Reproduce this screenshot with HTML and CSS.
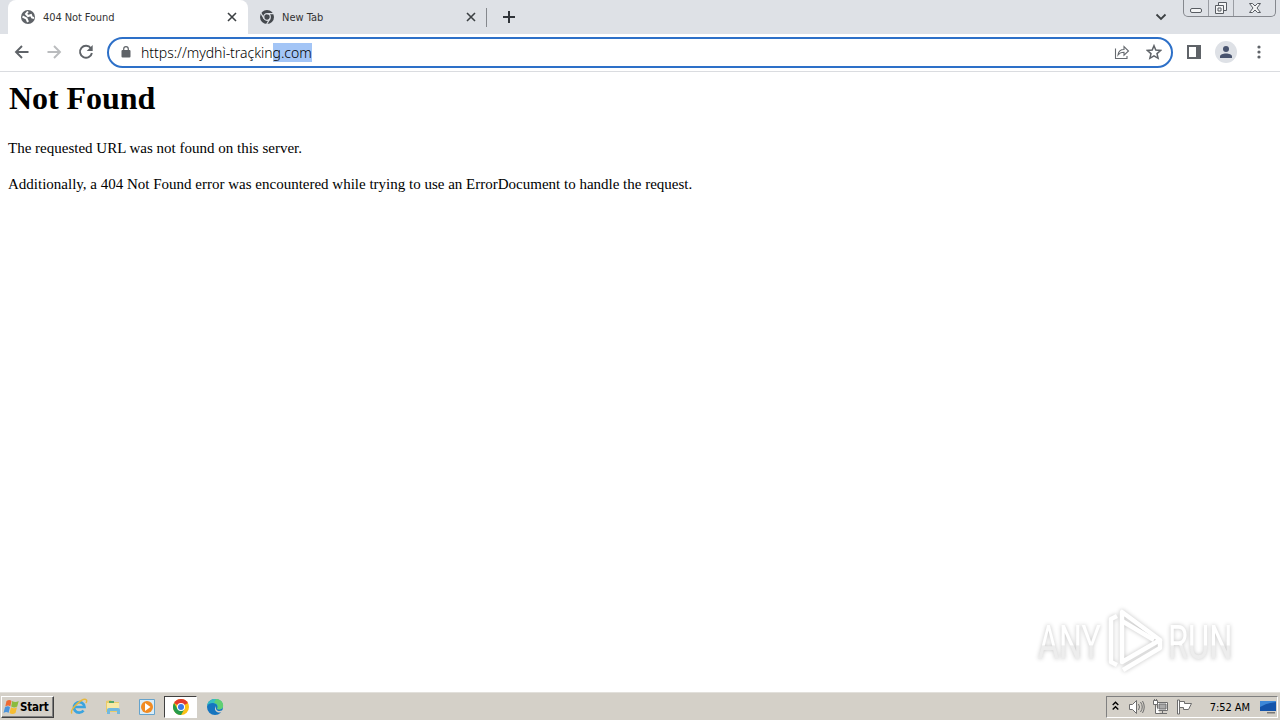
FILE: index.html
```html
<!DOCTYPE html>
<html lang="en">
<head>
    <meta charset="UTF-8">
    <title>404 Not Found</title>
    <link rel="stylesheet" href="styles.css">
</head>
<body>
    <!-- Tab strip -->
    <header class="tabs">
        <div class="tab active">
            <svg class="favicon" viewBox="0 0 16 16"><circle cx="8" cy="8" r="7" fill="#5f6368"/><path d="M2.500 7.500l4 2 1.500 3.500M8 2.500L6 5l2 2 3-1 1 2.500 2 .5" fill="none" stroke="#fff" stroke-width="2"/></svg>
            <span class="tab-title title-404">404 Not Found</span>
            <svg class="close" viewBox="0 0 10 10"><path d="M1 1l8 8M9 1L1 9"/></svg>
        </div>
        <div class="tab">
            <svg class="favicon" viewBox="0 0 16 16"><circle cx="8" cy="8" r="7" fill="#45494e"/><g fill="none" stroke="#dee1e6" stroke-width="1.2"><circle cx="8" cy="8" r="3.3"/><path d="M8 4.7h7M5.1 9.6L1.7 3.7M10.9 9.6l-3.4 5.9"/></g></svg>
            <span class="tab-title title-new">New Tab</span>
            <svg class="close" viewBox="0 0 10 10"><path d="M1 1l8 8M9 1L1 9"/></svg>
        </div>
        <span class="divider"></span>
        <svg class="plus" viewBox="0 0 12 12"><path d="M6 0v12M0 6h12"/></svg>
        <svg class="chevron" viewBox="0 0 12 8"><path d="M1.500 1.500L6 6l4.500-4.500"/></svg>
        <div class="window-buttons">
            <span><svg width="14" height="14" viewBox="0 0 14 14"><rect x="1.500" y="7.500" width="11" height="4" rx="1.500"/></svg></span>
            <span><svg width="14" height="14" viewBox="0 0 14 14"><path d="M4.500 4V1.500h8v8H10M1.500 4.500h8v8h-8zM4 7h3v3H4z"/></svg></span>
            <span><svg width="14" height="14" viewBox="0 0 14 14"><path d="M1.500 2.500h3L7 5l2.500-2.500h3L9 7l3.500 4.500h-3L7 9l-2.500 2.500h-3L5 7z"/></svg></span>
        </div>
    </header>

    <!-- Toolbar -->
    <nav class="toolbar">
        <svg class="nav-icon" viewBox="0 0 16 16"><path d="M14.500 8H2M8 2L2 8l6 6"/></svg>
        <svg class="nav-icon disabled" viewBox="0 0 16 16"><path d="M1.500 8H14M8 2l6 6-6 6"/></svg>
        <svg class="nav-icon" viewBox="0 0 16 16"><path d="M12.900 4.300A6 6 0 1 0 13.900 9"/><path d="M14.700 1v6h-6z" class="solid"/></svg>
        <div class="omnibox">
            <svg class="lock" viewBox="0 0 10 12"><rect x=".5" y="4" width="9" height="7.500" rx="1" fill="#5f6368"/><path d="M2.700 5V3a2.300 2.300 0 0 1 4.600 0v2" fill="none" stroke="#5f6368" stroke-width="1.200"/></svg>
            <span class="url">https://mydhì-traçkin<mark>g.com</mark></span>
            <svg class="share" viewBox="0 0 16 16"><path d="M1.500 4.500v10h11.500v-2.500M4 11c.5-4 3-5.500 6-5.500V2.500L14.500 7 10 11.200V8.300C7.500 8.300 5.500 9 4 11z"/></svg>
            <svg class="star" viewBox="0 0 16 16"><path d="M8 1.700l1.800 4.400 4.800.4-3.600 3.100 1.100 4.700L8 11.800l-4.100 2.500L5 9.600 1.400 6.500l4.800-.4z"/></svg>
        </div>
        <svg class="panel" viewBox="0 0 14 14"><path d="M0 0h14v14H0z M2 2v10h7V2z" fill="#5f6368" fill-rule="evenodd"/></svg>
        <span class="avatar"><svg width="12" height="12" viewBox="0 0 12 12"><circle cx="6" cy="3" r="3" fill="#48536e"/><path d="M0 12v-1.500C0 8.500 3 7.500 6 7.500s6 1 6 3V12z" fill="#48536e"/></svg></span>
        <svg class="dots" viewBox="0 0 4 14"><circle cx="2" cy="2" r="1.600"/><circle cx="2" cy="7" r="1.600"/><circle cx="2" cy="12" r="1.600"/></svg>
    </nav>

    <!-- Page -->
    <main class="page">
        <h1>Not Found</h1>
        <p>The requested URL was not found on this server.</p>
        <p>Additionally, a 404 Not Found error was encountered while trying to use an ErrorDocument to handle the request.</p>
        <svg class="watermark" viewBox="0 0 210 72">
            <defs>
                <linearGradient id="fade" x1="0" y1="0" x2="0" y2="1">
                    <stop offset="54%" stop-color="#fff"/>
                    <stop offset="56%" stop-color="#ededed"/>
                </linearGradient>
            </defs>
            <g fill="url(#fade)">
                <text transform="translate(8 54) scale(.67 1)">ANY</text>
                <text transform="translate(138 54) scale(.68 1)">RUN</text>
            </g>
            <g class="mark">
                <path d="M87 11l-6 3v43l6 3"/>
                <path d="M92 7v50l38-22z"/>
                <path d="M92 16l32 19M93 65l37-22v-8"/>
            </g>
        </svg>
    </main>

    <!-- Taskbar -->
    <footer class="taskbar">
        <div class="start">
            <svg width="17" height="16" viewBox="0 0 17 16"><path d="M3.500 2q3-2 5 0L7.300 7.500q-2-2-5 0z" fill="#ef6a32"/><path d="M9.200 2q3 2 6.500 0l-1.500 5.500q-3 2-6 0z" fill="#8bbb3d"/><path d="M2 8.300q3-2 5 0L5.500 14q-2-2-5 0z" fill="#4b94dc"/><path d="M8 8.300q3 2 6 0L12.500 14q-3 2-6 0z" fill="#f6bd32"/></svg>
            <span>Start</span>
        </div>
        <div class="apps">
            <span class="app"><svg width="18" height="18" viewBox="0 0 18 18"><path d="M13.500 12.500A5.300 5.300 0 1 1 14.500 9H4.500" fill="none" stroke="#3ba4df" stroke-width="2.700"/><path d="M2 15.500C-1 12 13-1.500 16.500 2c.5.500 0 2-.5 3" fill="none" stroke="#e7b83d" stroke-width="1.400"/></svg></span>
            <span class="app"><svg width="18" height="18" viewBox="0 0 18 18"><path d="M2 3l5-1 1 2h7v10H2z" fill="#e9cb6a"/><path d="M3 5h12v6H3z" fill="#f8e9a5"/><path d="M5 3h5v2H5z" fill="#54a66a"/><path d="M3 16v-4q0-2 2-2h9q2 0 2 2v4h-3v-3H6v3z" fill="#72b9df"/></svg></span>
            <span class="app"><svg width="18" height="18" viewBox="0 0 18 18"><path d="M1.500 1.500h15v15h-15z" fill="#d9edf9" stroke="#65a3cc"/><circle cx="9" cy="9" r="6" fill="#f18b22"/><path d="M7 5v8l5.500-4z" fill="#fff"/></svg></span>
            <span class="app pressed"><svg width="16" height="16" viewBox="0 0 16 16"><circle cx="8" cy="8" r="8" fill="#fbc116"/><path d="M8 8L1.070 4A8 8 0 0 1 14.930 4z" fill="#e33b2e"/><path d="M1.070 4A8 8 0 0 0 8 16l3.500-6H4.500z" fill="#269b4b"/><circle cx="8" cy="8" r="4" fill="#fff"/><circle cx="8" cy="8" r="3" fill="#3979e8"/></svg></span>
            <span class="app"><svg width="18" height="18" viewBox="0 0 18 18"><circle cx="9" cy="9" r="8" fill="#1675bf"/><path d="M1 8C2 3 5 1 9 1c5 0 8 3 8 7 0 3-3 4-6 3 2-3-1-6-4-6-3 0-5 1-6 3z" fill="#37bfc0"/><path d="M10 1c5 0 8 4 7 8-1 2-3 3-6 2 2-3 0-6-3-6z" fill="#60cf73"/><path d="M10 8c-1 4 2 6 6 4.500L18 12v6h-3l1-4c-5 2-9-2-6-6z" fill="#d4d0c8"/></svg></span>
        </div>
        <div class="tray">
            <svg class="expand" width="7" height="10" viewBox="0 0 7 10"><path d="M.7 4L3.500 1.200 6.300 4M.7 8.500l2.800-2.800 2.800 2.800" fill="none" stroke="#000" stroke-width="1.400"/></svg>
            <svg class="sound" width="17" height="16" viewBox="0 0 17 16"><path d="M1.500 5.500h3l4-4v13l-4-4h-3z" fill="#fff"/><path d="M10.500 5q2 3 0 6M12.500 3q3.500 5 0 10M14.500 2q3.500 6 0 12"/></svg>
            <svg class="network" width="17" height="16" viewBox="0 0 17 16"><path d="M5.500 3.500h10v8h-10zM8 14.500h7M10.500 12v2" fill="#fff"/><path d="M7 5h7v5H7z" fill="#aaa"/><path d="M1.500 1.500v4h4v-4zM2.500 0v2M4.500 0v2M3.500 6v8.500H8" fill="#fff"/></svg>
            <svg class="flag" width="17" height="16" viewBox="0 0 17 16"><path d="M3.500 2.500h5v2h7l-3 6h-5v-2h-4z" fill="#fff"/><path d="M1.500 1v14h2V1z" fill="#fff"/></svg>
            <span class="clock">7:52 AM</span>
            <svg class="desktop" width="16" height="14" viewBox="0 0 16 14"><path d="M0 1h16v10H0z" fill="#1454aa"/><path d="M0 7Q7 3 16 2V1H0z" fill="#3d88d8"/><path d="M7 12h8v1.500H7z" fill="#777"/></svg>
        </div>
    </footer>
</body>
</html>
```
FILE: styles.css
```css
* {
    box-sizing: border-box;
}

body {
    margin: 0;
    height: 720px;
    display: flex;
    flex-direction: column;
    overflow: hidden;
    background: #fff;
    font-family: "DejaVu Sans Condensed", "DejaVu Sans", sans-serif;
}

svg {
    display: block;
    flex: none;
}

.tabs {
    display: flex;
    height: 34px;
    padding-left: 8px;
    background: #dee1e6;
}

.tab {
    display: flex;
    align-items: center;
    width: 238px;
    padding: 0 10px 0 11px;
}

.tab.active {
    width: 240px;
    padding: 0 11px 0 12px;
    background: #fff;
    border-radius: 8px 8px 0 0;
}

.favicon {
    width: 16px;
    height: 16px;
}

.tab-title {
    flex: 1;
    margin-left: 7px;
    font-family: "DejaVu Sans", sans-serif;
    font-stretch: condensed;
    font-size: 11px;
    white-space: nowrap;
    color: #333;
}

.title-404 {
    letter-spacing: -0.1px;
}

.close {
    width: 10px;
    height: 10px;
}

.close path {
    stroke: #3c4043;
    stroke-width: 1.6;
}

.divider {
    width: 1px;
    height: 19px;
    margin-top: 8px;
    background: #85888d;
}

.plus {
    width: 12px;
    height: 12px;
    margin: 11px 0 0 16px;
    stroke: #303439;
    stroke-width: 2;
}

.chevron {
    width: 12px;
    height: 8px;
    margin: 13px 16px 0 auto;
    fill: none;
    stroke: #3c4043;
    stroke-width: 1.8;
}

.window-buttons {
    display: flex;
    width: 93px;
    height: 17px;
    margin-right: 4px;
    border: 1px solid #85888e;
    border-top: 0;
    border-radius: 0 0 5px 5px;
}

.window-buttons span {
    display: flex;
    width: 25px;
    justify-content: center;
    border-right: 1px solid #9a9da3;
}

.window-buttons span:last-child {
    flex: 1;
    border: 0;
}

.window-buttons svg {
    margin-top: 1px;
    fill: #f3f4f5;
    stroke: #585c62;
}

.toolbar {
    display: flex;
    align-items: center;
    height: 38px;
    padding: 0 19px 1px 14px;
    border-bottom: 1px solid #dadce0;
}

.nav-icon {
    width: 16px;
    height: 16px;
    margin-right: 16px;
    fill: none;
    stroke: #5f6368;
    stroke-width: 1.9;
}

.nav-icon.disabled {
    stroke: #babcbe;
}

.nav-icon .solid {
    fill: #5f6368;
    stroke: none;
}

.omnibox {
    display: flex;
    align-items: center;
    width: 1066px;
    height: 31px;
    margin-left: -3px;
    padding: 0 9px 0 12px;
    border: 2px solid #2d70c8;
    border-radius: 16px;
}

.lock {
    width: 10px;
    height: 12px;
    margin-right: 10px;
}

.url {
    font-family: "Noto Sans", sans-serif;
    font-size: 14px;
    line-height: 20px;
    letter-spacing: -0.03px;
    font-weight: 300;
    padding-top: 1px;
    white-space: nowrap;
}

mark {
    background: linear-gradient(#a3c5f6, #a3c5f6);
    color: #000;
}

.share {
    width: 16px;
    height: 16px;
    margin-left: auto;
    fill: none;
    stroke: #666a6f;
    stroke-width: 1.1;
}

.star {
    width: 16px;
    height: 16px;
    margin-left: 16px;
    fill: none;
    stroke: #5f6368;
    stroke-width: 1.5;
}

.panel {
    width: 14px;
    height: 14px;
    margin-left: 14px;
}

.avatar {
    display: flex;
    align-items: center;
    justify-content: center;
    width: 22px;
    height: 22px;
    margin-left: 14px;
    border-radius: 50%;
    background: #dee1e6;
}

.dots {
    width: 4px;
    height: 14px;
    margin-left: auto;
    fill: #5f6368;
}

.page {
    position: relative;
    flex: 1;
    padding: 8px;
    font-family: "Liberation Serif", serif;
    font-size: 15px;
}

h1 {
    margin: 0 0 22px;
    padding-left: 1px;
    font-size: 32px;
    line-height: 37px;
    letter-spacing: -0.05px;
}

p {
    width: max-content;
    margin: 0 0 18px;
    line-height: 18px;
}

.watermark {
    position: absolute;
    left: 1030px;
    top: 533px;
    width: 210px;
    height: 72px;
    overflow: visible;
    font-family: Roboto, sans-serif;
    font-size: 48px;
    filter: drop-shadow(0 0 2px #c4c4c4);
}

.mark {
    fill: none;
    stroke: #fff;
    stroke-width: 4.5;
    stroke-linejoin: round;
}

.taskbar {
    display: flex;
    align-items: center;
    height: 28px;
    padding: 1px 2px 0 1px;
    border-top: 1px solid #e2e0db;
    background: #d4d0c8;
}

.start {
    display: flex;
    align-items: center;
    width: 53px;
    height: 22px;
    padding-left: 1px;
    border: 1px solid;
    border-color: #fff #404040 #404040 #fff;
    box-shadow: inset -1px -1px #808080;
    font-size: 11.5px;
    font-weight: bold;
    letter-spacing: -0.2px;
}

.apps {
    display: flex;
    align-items: center;
    margin-left: 8px;
}

.app {
    display: flex;
    align-items: center;
    justify-content: center;
    width: 33px;
    height: 22px;
    margin-right: 1px;
}

.pressed {
    background: #fff;
    border: 1px solid;
    border-color: #404040 #fff #fff #404040;
}

.tray {
    display: flex;
    align-items: center;
    width: 172px;
    height: 22px;
    margin-left: auto;
    padding: 0 1px 0 5px;
    border: 1px solid;
    border-color: #808080 #fff #fff #808080;
}

.tray .expand {
    margin-bottom: 2px;
}

.tray .sound,
.tray .network,
.tray .flag {
    margin-left: 9px;
    fill: none;
    stroke: #6d6d6d;
}

.tray .network,
.tray .flag {
    margin-left: 7px;
}

.clock {
    margin-left: auto;
    font-size: 11px;
    letter-spacing: -0.05px;
    white-space: nowrap;
}

.desktop {
    margin-left: 10px;
}
```
